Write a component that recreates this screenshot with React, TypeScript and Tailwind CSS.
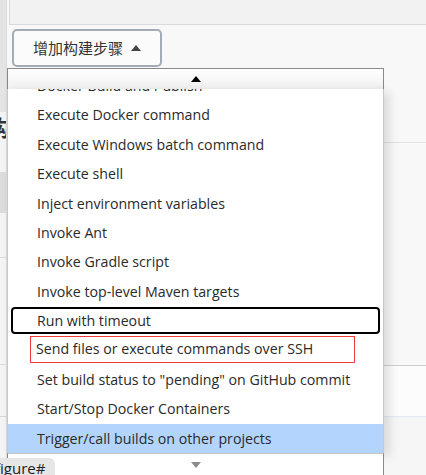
const items = [
  'Docker Build and Publish',
  'Execute Docker command',
  'Execute Windows batch command',
  'Execute shell',
  'Inject environment variables',
  'Invoke Ant',
  'Invoke Gradle script',
  'Invoke top-level Maven targets',
  'Run with timeout',
  'Send files or execute commands over SSH',
  'Set build status to "pending" on GitHub commit',
  'Start/Stop Docker Containers',
  'Trigger/call builds on other projects',
]

function LeftStrip() {
  return (
    <div className="w-[7px] shrink-0 h-full overflow-hidden bg-[#ececec] border-r border-[#dcdcdc] flex flex-col">
      <div className="h-[112px] shrink-0 bg-[#e4e4e4]" />
      <div className="h-[28px] shrink-0 overflow-hidden bg-[#f4f4f4]">
        <span className="block -ml-[12px] text-[22px] leading-[28px] font-bold text-[#333] font-['Noto_Sans_CJK_SC',sans-serif]">
          构
        </span>
      </div>
      <div className="h-[32px] shrink-0 bg-[#f4f4f4]" />
      <div className="h-[41px] shrink-0 bg-[#dcdcdc]" />
      <div className="h-[45px] shrink-0 bg-[#f4f4f4] border-b border-[#cfe3d2]" />
      <div className="h-[107px] shrink-0 bg-[#f4f4f4] border-b border-[#cfe3d2]" />
      <div className="h-[52px] shrink-0 bg-[#f4f4f4] border-b border-[#d6d6d6]" />
      <div className="flex-1 bg-[#f4f4f4]" />
    </div>
  )
}

function Dropdown() {
  return (
    <div className="absolute left-[7px] top-[68px] w-[377px] font-['Open_Sans',sans-serif] text-[14.2px] text-[#2a2a2a]">
      <div className="h-[21px] border border-b-0 border-[#8a8a8a] bg-gradient-to-b from-white to-[#f0f0f0] flex items-center justify-center">
        <span className="w-0 h-0 border-x-[5px] border-x-transparent border-b-[6px] border-b-black" />
      </div>
      <div className="h-[364px] overflow-hidden bg-white border-x border-[#c8c8c8] shadow-[5px_3px_10px_rgba(0,0,0,0.13)]">
        <div className="-mt-[18px]">
          {items.map((label, i) => {
            const focused = label === 'Run with timeout'
            const marked = label.startsWith('Send files')
            const selected = i === items.length - 1
            return (
              <div
                key={label}
                className={`h-[29.4px] flex items-center ${selected ? 'bg-[#b3d4fc]' : ''}`}
              >
                {focused ? (
                  <div className="mx-[3px] h-[27px] w-full flex items-center rounded-[4px] border-2 border-black pl-[24px]">
                    {label}
                  </div>
                ) : marked ? (
                  <div className="ml-[22px] h-[27px] w-[325px] self-start flex items-center border border-[#f23b3b] pl-[5px]">
                    {label}
                  </div>
                ) : (
                  <span className="pl-[29px]">{label}</span>
                )}
              </div>
            )
          })}
        </div>
      </div>
      <div className="h-[22px] bg-white border-x border-t border-x-[#8a8a8a] border-t-[#c4c4c4] flex items-center justify-center">
        <span className="w-0 h-0 border-x-[5px] border-x-transparent border-t-[6px] border-t-[#8c8c8c]" />
      </div>
    </div>
  )
}

export default function App() {
  return (
    <div className="relative w-[426px] h-[475px] overflow-hidden bg-[#f8f8f8] flex">
      <LeftStrip />

      <div className="flex-1 flex flex-col">
        <div className="h-[25px] shrink-0 ml-[2px] bg-[#f2f2f2] border-l border-b border-[#dadada]" />

        <div className="h-[118px] shrink-0 pt-[4px] pl-[5px] border-b border-[#e2e2e2]">
          <button
            type="button"
            className="w-[150px] h-[38px] rounded-[5px] border-2 border-[#a3acb6] bg-[#fbfbfb] flex items-center justify-center gap-[8px] text-[15px] text-[#333] font-['Noto_Sans_CJK_SC',sans-serif]"
          >
            增加构建步骤
            <span className="w-0 h-0 border-x-[5px] border-x-transparent border-b-[6px] border-b-[#444]" />
          </button>
        </div>

        <div className="h-[223px] shrink-0 border-b border-[#cfcfcf]" />
        <div className="h-[51px] shrink-0 bg-[#fcfcfc] border-b border-[#e3e9ee]" />
        <div className="flex-1 bg-[#f6f6f6]" />
      </div>

      <Dropdown />

      <div className="absolute left-0 top-[458px] h-[20px] w-[55px] rounded-tr-[6px] bg-[#e6e6e6] overflow-hidden">
        <span className="block -ml-[5px] pt-[1px] text-[15px] leading-[18px] text-[#222] font-['Open_Sans',sans-serif]">
          figure#
        </span>
      </div>
    </div>
  )
}
